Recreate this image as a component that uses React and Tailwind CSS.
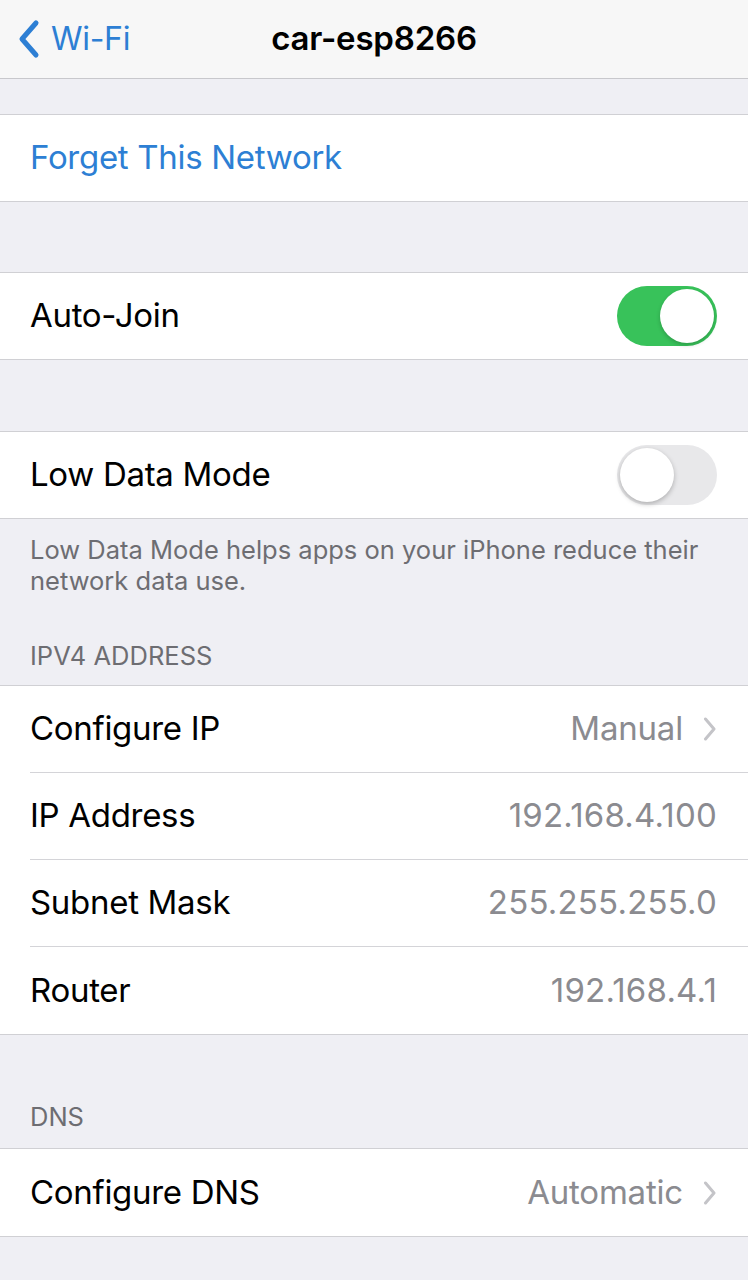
import React from "react";

const font = { fontFamily: "Inter, Roboto, 'Liberation Sans', sans-serif" };

function Chevron() {
  return (
    <svg width="14" height="24" viewBox="0 0 14 24" className="ml-[20px]">
      <path d="M2.5 2 L11 12 L2.5 22" fill="none" stroke="#c4c4c8" strokeWidth="3" strokeLinecap="round" strokeLinejoin="round" />
    </svg>
  );
}

function Toggle({ on }) {
  return on ? (
    <div className="w-[100px] h-[60px] rounded-full bg-[#38c25a] flex items-center justify-end pr-[3px]">
      <div className="w-[54px] h-[54px] rounded-full bg-white shadow-[0_2px_4px_rgba(0,0,0,0.2)]" />
    </div>
  ) : (
    <div className="w-[100px] h-[60px] rounded-full bg-[#e8e8ea] flex items-center justify-start pl-[3px]">
      <div className="w-[54px] h-[54px] rounded-full bg-white shadow-[0_2px_5px_rgba(0,0,0,0.25)]" />
    </div>
  );
}

function Row({ label, value, chevron, toggle, last, blue, short, digits }) {
  return (
    <div className={`${short ? "h-[86px]" : "h-[87px]"} flex items-center pl-[30px]`}>
      <div className={`flex-1 flex items-center h-full pr-[31px] ${last ? "" : "border-b border-[#d4d4d8]"}`}>
        <span className={`text-[33px] tracking-[-0.3px] ${blue ? "text-[#2d7fd4]" : "text-black"}`}>{label}</span>
        <div className="flex-1" />
        {value && (
          <span className={`text-[33px] text-[#8b8b90] ${digits ? "tracking-[0.2px]" : "tracking-[-0.2px]"}`}>{value}</span>
        )}
        {chevron && <Chevron />}
        {toggle !== undefined && <Toggle on={toggle} />}
      </div>
    </div>
  );
}

function Group({ children }) {
  return <div className="bg-white border-t border-b border-[#d0d0d4]">{children}</div>;
}

export default function App() {
  return (
    <div style={font} className="w-[748px] h-[1280px] bg-[#efeff4] overflow-hidden">
      <div className="h-[79px] bg-[#f7f7f7] border-b border-[#c8c8cc] flex items-center relative">
        <div className="flex items-center pl-[17px] text-[#2d7fd4]">
          <svg width="24" height="40" viewBox="0 0 24 40">
            <path d="M19 4 L5 20 L19 36" fill="none" stroke="#2d7fd4" strokeWidth="5" strokeLinecap="round" strokeLinejoin="round" />
          </svg>
          <span className="text-[32px] ml-[10px] tracking-[-0.3px]">Wi-Fi</span>
        </div>
        <div className="absolute left-0 right-0 text-center text-[33px] font-semibold text-black tracking-[-0.2px]">car-esp8266</div>
      </div>
      <div className="h-[35px]" />
      <Group>
        <Row label="Forget This Network" blue last short />
      </Group>
      <div className="h-[70px]" />
      <Group>
        <Row label="Auto-Join" toggle={true} last short />
      </Group>
      <div className="h-[71px]" />
      <Group>
        <Row label="Low Data Mode" toggle={false} last short />
      </Group>
      <div className="pl-[30px] pr-[20px] pt-[15px] text-[25.5px] leading-[31px] text-[#6d6d72]">
        Low Data Mode helps apps on your iPhone reduce their network data use.
      </div>
      <div className="px-[30px] pt-[44px] pb-[14px] text-[25.5px] leading-[31px] text-[#6d6d72]">IPV4 ADDRESS</div>
      <Group>
        <Row label="Configure IP" value="Manual" chevron />
        <Row label="IP Address" value="192.168.4.100" digits />
        <Row label="Subnet Mask" value="255.255.255.0" digits />
        <Row label="Router" value="192.168.4.1" digits last />
      </Group>
      <div className="px-[30px] pt-[64px] pb-[13px] text-[25.5px] leading-[36px] text-[#6d6d72]">DNS</div>
      <Group>
        <Row label="Configure DNS" value="Automatic" chevron last />
      </Group>
    </div>
  );
}
